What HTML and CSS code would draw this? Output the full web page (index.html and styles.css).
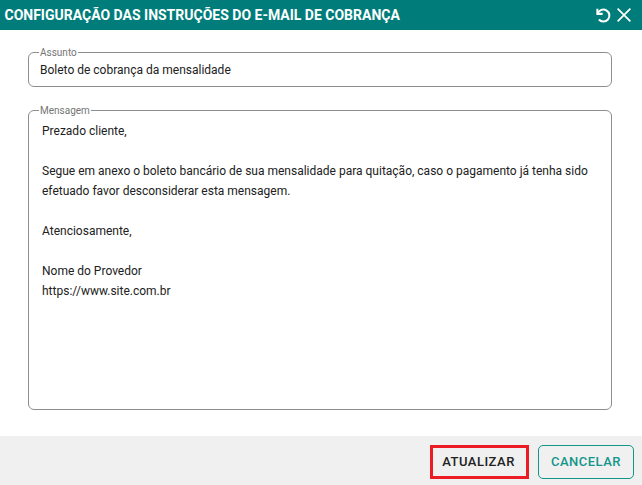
FILE: index.html
```html
<!DOCTYPE html>
<html lang="pt">
<head>
<meta charset="utf-8">
<title>Configuração</title>
<link rel="stylesheet" href="styles.css">
</head>
<body>
<div class="dialog">
  <header class="bar">
    <h1 class="title">CONFIGURAÇÃO DAS INSTRUÇÕES DO E-MAIL DE COBRANÇA</h1>
    <div class="icons">
      <svg class="icon" viewBox="0 0 24 24" width="18" height="18"><path d="M4.5 3.5V10.5H11.5" fill="none" stroke="#fff" stroke-width="2.7"/><path d="M5 10A8 8 0 1 1 6.5 18" fill="none" stroke="#fff" stroke-width="2.7"/></svg>
      <svg class="icon" viewBox="0 0 24 24" width="18" height="18"><path d="M3.5 3.5L20.5 20.5M20.5 3.5L3.5 20.5" fill="none" stroke="#fff" stroke-width="2.3"/></svg>
    </div>
  </header>
  <main class="body">
    <fieldset class="field subject">
      <legend class="legend">Assunto</legend>
      <div class="value">Boleto de cobrança da mensalidade</div>
    </fieldset>
    <fieldset class="field message">
      <legend class="legend">Mensagem</legend>
      <div class="text">
        <p>Prezado cliente,</p>
        <p>&nbsp;</p>
        <p>Segue em anexo o boleto bancário de sua mensalidade para quitação, caso o pagamento já tenha sido</p>
        <p>efetuado favor desconsiderar esta mensagem.</p>
        <p>&nbsp;</p>
        <p>Atenciosamente,</p>
        <p>&nbsp;</p>
        <p>Nome do Provedor</p>
        <p>https://www.site.com.br</p>
      </div>
    </fieldset>
  </main>
  <footer class="foot">
    <button class="btn update">ATUALIZAR</button>
    <button class="btn cancel">CANCELAR</button>
  </footer>
</div>
</body>
</html>
```
FILE: styles.css
```css
* { box-sizing: border-box; }
html, body { margin: 0; padding: 0; height: 100%; }
body { font-family: Roboto, "Liberation Sans", sans-serif; color: #212121; background: #fff; overflow: hidden; }
.dialog { display: flex; flex-direction: column; width: 642px; height: 485px; }
.bar { flex: 0 0 30px; background: #007d7b; display: flex; align-items: center; justify-content: space-between; padding: 0 9px 0 4.5px; }
.title { margin: 0; font-size: 14px; font-weight: 700; color: #fff; white-space: nowrap; }
.icons { display: flex; gap: 3px; align-items: center; }
.icon { display: block; }
.body { flex: 1; display: flex; flex-direction: column; padding: 17px 30px 26px 28px; gap: 18px; }
.field { margin: 0; padding: 0 11px; border: 1px solid #8e8e8e; border-radius: 6px; min-width: 0; }
.subject { height: 40px; }
.message { flex: 1; padding: 0 13px; }
.legend { padding: 0 1px; font-size: 10px; line-height: 11px; color: #757575; }
.subject .legend { margin-left: -1px; }
.message .legend { margin-left: -3px; }
.value { font-size: 12px; line-height: 16px; margin-top: 4px; }
.text { font-size: 12px; line-height: 20px; margin-top: 5px; }
.text p { margin: 0; white-space: nowrap; }
.foot { flex: 0 0 49px; background: #f0f0f0; display: flex; justify-content: flex-end; align-items: center; gap: 9px; padding: 2px 8px 0 0; }
.btn { height: 34px; font-family: Roboto, "Liberation Sans", sans-serif; font-size: 13px; font-weight: 500; letter-spacing: 0.5px; background: transparent; border-radius: 5px; cursor: pointer; }
.update { width: 99px; padding: 0 2px 0 0; border: 3px solid #ec1c24; border-radius: 0; color: #212121; }
.cancel { width: 96px; border: 1px solid #12968b; color: #12968b; }
```
